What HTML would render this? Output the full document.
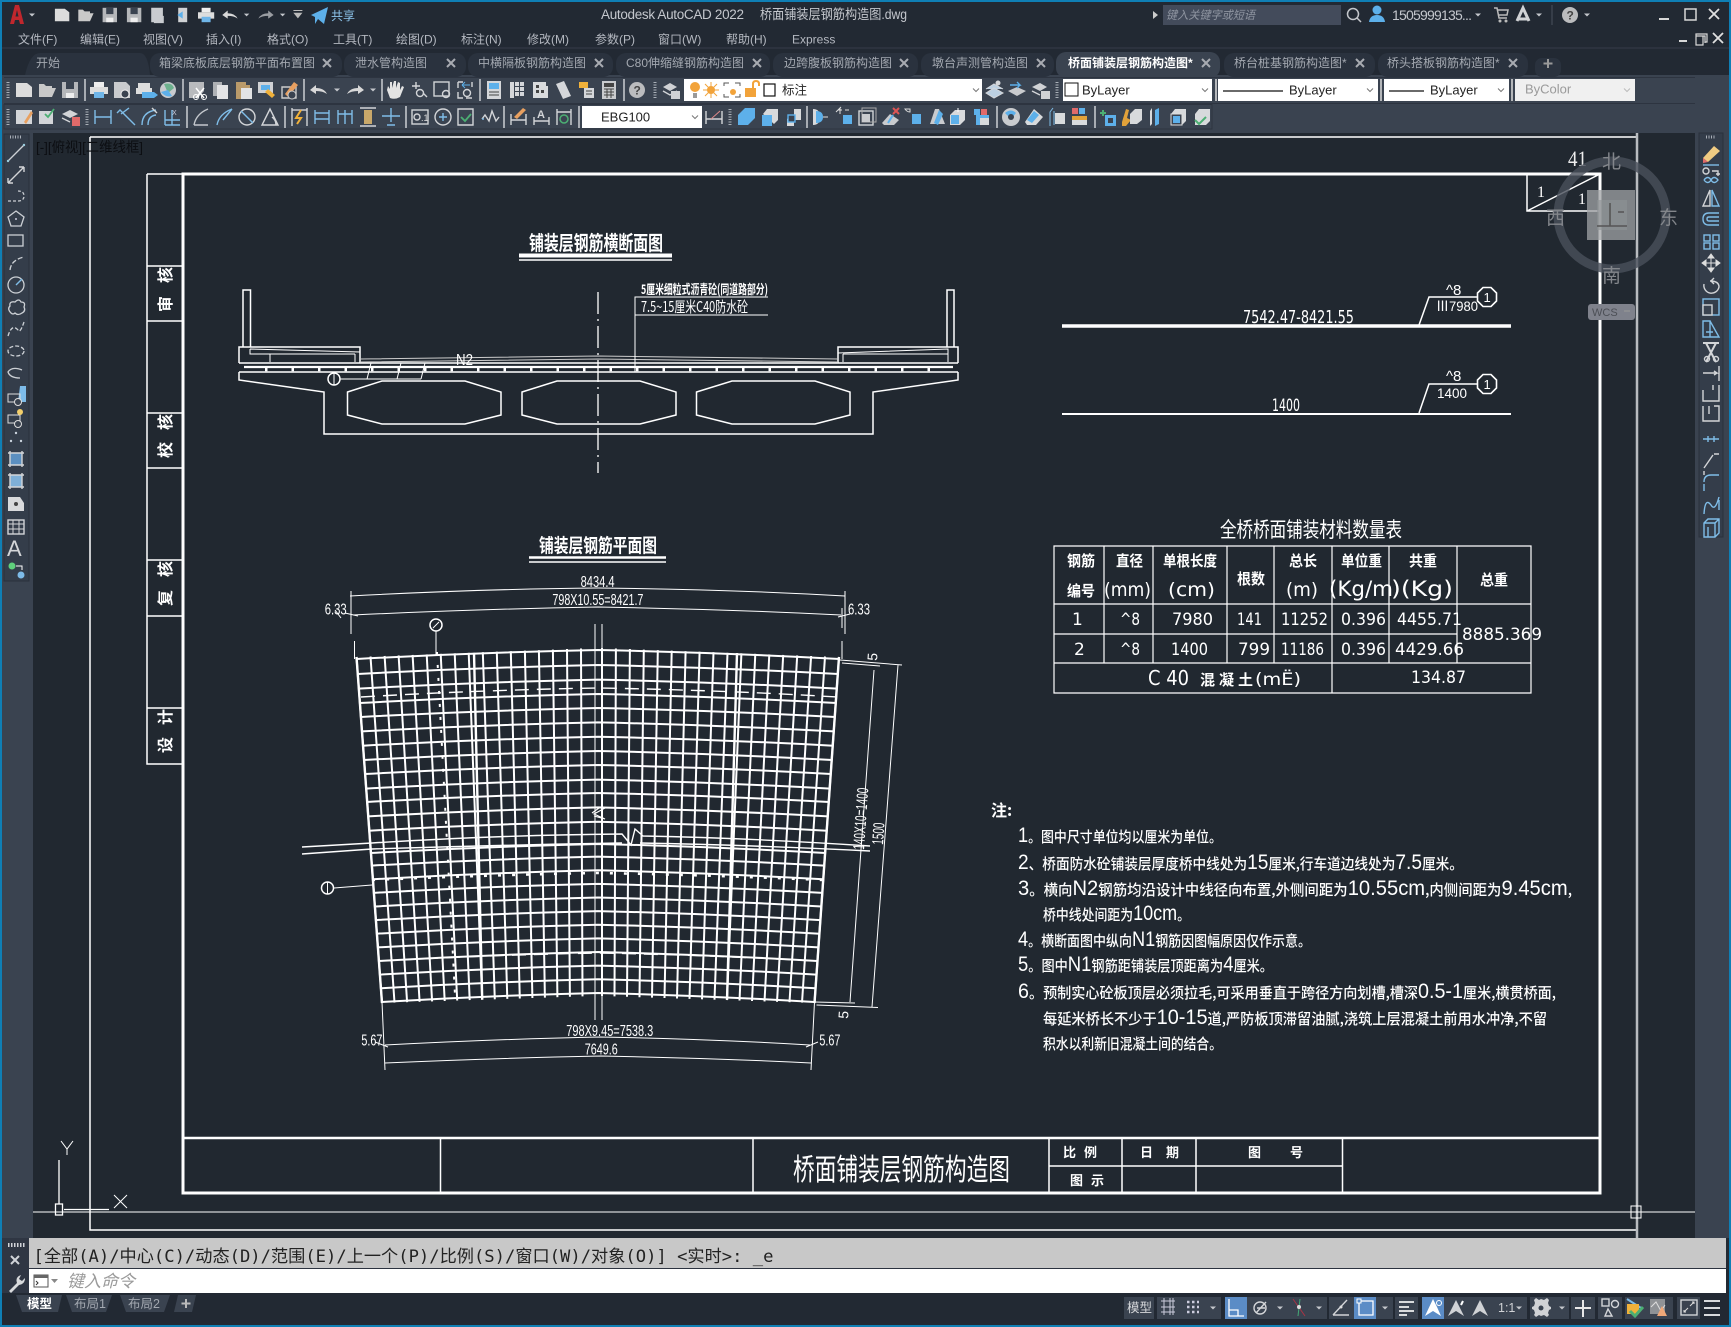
<!DOCTYPE html>
<html lang="zh"><head><meta charset="utf-8"><title>AutoCAD 2022</title>
<style>
html,body{margin:0;padding:0;background:#212830;overflow:hidden}
svg{display:block}
text{font-family:"Liberation Sans","Noto Sans CJK SC",sans-serif}
.m{font-size:12px;fill:#b4b8c0}
.t{font-size:12px;fill:#a3a8b0}
.c{fill:#fff;font-family:"Noto Sans CJK SC",sans-serif;font-weight:400}
.d{fill:#fff;font-size:16px;font-family:"Liberation Sans","Noto Sans CJK SC",sans-serif}
.w{fill:#fff;font-family:"DejaVu Sans","Noto Sans CJK SC",sans-serif;font-size:16px}
.n{fill:#fff;font-family:"Noto Sans CJK SC",sans-serif;font-size:15px;font-weight:500}
.n tspan{font-size:21px;font-weight:400;font-family:"Liberation Sans","Noto Sans CJK SC",sans-serif}
.l{stroke:#fff;fill:none;stroke-width:1.5}
.l1{stroke:#fff;fill:none;stroke-width:1}
.bl{fill:none;stroke:#7fbde8;stroke-width:1.4}
.gr{fill:none;stroke:#d3d5d8;stroke-width:1.4}
.sep{stroke:#d6d8dc;stroke-width:1.4}
.dot{fill:none;stroke:#ccd0d5;stroke-width:1.3}
</style></head><body>
<svg xmlns="http://www.w3.org/2000/svg" width="1731" height="1327" viewBox="0 0 1731 1327">
<defs>
<path id="x" d="M-4-4L4 4M4-4L-4 4" stroke="#a8abb1" stroke-width="2" fill="none"/>
<path id="ar" d="M-3-1.5H3L0 1.5z" fill="#c4c7cc"/>
<path id="ch" d="M-3-1.5L0 1.5L3-1.5" fill="none" stroke="#777"/>
<path id="grip" d="M0-8V8" stroke="#aab0b8" stroke-width="3" stroke-dasharray="1 1.5" fill="none"/>
<path id="new" d="M-8-7H3L8-3V7H-8z" fill="#dcdcdc"/>
<path id="open" d="M-8 7V-6H-3L-1-4H5V-2H-5L-8 7H5L9-2H-5" fill="#c9c9c9"/>
<g id="save"><path d="M-8-8H8V8H-8z" fill="#b5b7ba"/><path d="M-4-8H4V-1H-4z" fill="#3a4350"/><path d="M-4 3H4V8H-4z" fill="#eee"/></g>
<g id="print"><path d="M-5-8H5V-3H-5z" fill="#eee"/><path d="M-9-3H9V4H-9z" fill="#ddd"/><path d="M-5 2H5V8H-5z" fill="#6fb5e8"/></g>
<path id="und" d="M-9 0L-3-5V-2Q5-2 8 4Q4 1-3 1V4z" fill="#d8d8d8"/>
<path id="red" d="M9 0L3-5V-2Q-5-2-8 4Q-4 1 3 1V4z" fill="#9a9da2"/>
<g id="dim"><path d="M-8-7V7M8-7V7M-8 0H8" class="bl"/></g>
<path id="r" d="M-241.5 0Q-120-6.5 0-9Q120-6.5 241.5 0" fill="none" stroke="#fff" stroke-width="2" vector-effect="non-scaling-stroke"/>
<path id="oct" d="M-4-9.5H4L9.5-4V4L4 9.5H-4L-9.5 4V-4z" fill="#212830" stroke="#fff" stroke-width="1.6"/>
</defs>

<!-- window base -->
<rect width="1731" height="1327" fill="#222933"/>
<rect x="33" y="133" width="1663" height="1105" fill="#212830"/>
<rect x="2" y="75" width="1727" height="58" fill="#3a4350"/>
<rect x="2" y="133" width="31" height="1105" fill="#3a4350"/>
<rect x="1695" y="133" width="34" height="1105" fill="#3a4350"/>
<rect x="4" y="134" width="25" height="447" fill="#343d4a" stroke="#2a313c"/>
<rect x="1699" y="133" width="24" height="404" fill="#343d4a" stroke="#2a313c"/>

<!-- title row -->
<path d="M10 24L15 5H19L24 24H20L19 20H15L14 24zM15.5 16.5H18.5L17 10z" fill="#c0272d"/>
<use href="#ar" x="32" y="15"/>
<g transform="translate(0,15) scale(.9)">
<use href="#new" x="69" y="0"/><use href="#open" x="95" y="0"/><use href="#save" x="122" y="0"/><use href="#save" x="149" y="0"/>
<path d="M168-8H181V8H168zM171 1H182V9H171z" fill="#c9ccd0"/><path d="M198-8H208V8H198z" fill="#d0d2d5"/><path d="M197 0L203-4V4z" fill="#5db0ea"/>
<use href="#print" x="229" y="0"/><use href="#und" x="256" y="0"/><use href="#ar" x="274" y="0"/><use href="#red" x="295" y="0"/><use href="#ar" x="314" y="0"/>
<path d="M326-5H336M327-2H335L331 3z" stroke="#bbb" fill="#bbb"/>
</g>
<path d="M311 15L328 7L324 24L318 19L315 24V17z" fill="#5db0ea"/>
<text x="331" y="20" class="m" style="fill:#8cc3ea">共享</text>
<text x="601" y="19" style="font-size:13.5px;fill:#c4c7cd" textLength="143" lengthAdjust="spacing">Autodesk AutoCAD 2022</text>
<text x="760" y="19" style="font-size:13.5px;fill:#c4c7cd" textLength="147" lengthAdjust="spacingAndGlyphs">桥面铺装层钢筋构造图.dwg</text>
<path d="M1153 11L1158 15L1153 19z" fill="#ccc"/>
<rect x="1163" y="5" width="178" height="20" fill="#434b5b"/>
<text x="1166" y="19" style="font-size:11.5px;fill:#8f95a1;font-style:italic" textLength="89" lengthAdjust="spacingAndGlyphs">键入关键字或短语</text>
<circle cx="1353" cy="14" r="5.5" fill="none" stroke="#c4c7cc" stroke-width="1.5"/><path d="M1357 18L1361 22" stroke="#c4c7cc" stroke-width="1.5"/>
<circle cx="1377" cy="10" r="4.5" fill="#5db0ea"/><path d="M1369 22Q1370 15 1377 15Q1384 15 1385 22z" fill="#5db0ea"/>
<text x="1392" y="20" style="font-size:14px;fill:#c4c7cd" textLength="80" lengthAdjust="spacing">1505999135...</text>
<use href="#ar" x="1478" y="15"/>
<path d="M1494 8H1497L1499 18H1507M1498 10H1508L1507 15H1499" fill="none" stroke="#bbb" stroke-width="1.5"/><circle cx="1500" cy="21" r="1.5" fill="#bbb"/><circle cx="1506" cy="21" r="1.5" fill="#bbb"/>
<path d="M1517 21L1523 8L1529 21M1518 19H1528" fill="none" stroke="#d0d2d5" stroke-width="3"/>
<use href="#ar" x="1539" y="15"/><path d="M1552 5V25" stroke="#4a515e"/>
<circle cx="1570" cy="15" r="8" fill="#bbbcbe"/><text x="1566.5" y="19.5" style="font-size:12px;font-weight:700;fill:#444">?</text><use href="#ar" x="1587" y="15"/>
<path d="M1659 19H1669" stroke="#d8d8d8" stroke-width="2"/><rect x="1685" y="9" width="11" height="11" fill="none" stroke="#d8d8d8" stroke-width="1.5"/><path d="M1709 9L1719 19M1719 9L1709 19" stroke="#e0e0e0" stroke-width="1.8"/>
<!-- menu row -->
<text x="18" y="43.5" class="m">文件(F)</text><text x="80" y="43.5" class="m">编辑(E)</text><text x="143" y="43.5" class="m">视图(V)</text><text x="206" y="43.5" class="m">插入(I)</text><text x="267" y="43.5" class="m">格式(O)</text><text x="333" y="43.5" class="m">工具(T)</text><text x="396" y="43.5" class="m">绘图(D)</text><text x="461" y="43.5" class="m">标注(N)</text><text x="527" y="43.5" class="m">修改(M)</text><text x="595" y="43.5" class="m">参数(P)</text><text x="658" y="43.5" class="m">窗口(W)</text><text x="726" y="43.5" class="m">帮助(H)</text><text x="792" y="43.5" class="m">Express</text>
<path d="M1679 41H1687" stroke="#d8d8d8" stroke-width="2"/><path d="M1696 36H1705V43M1696 36V34H1707V42H1705M1696 36H1703V45H1696z" fill="none" stroke="#d8d8d8" stroke-width="1.2"/><path d="M1713 33L1723 43M1723 33L1713 43" stroke="#e0e0e0" stroke-width="1.8"/>
<path d="M2 48H1729" stroke="#353c48"/>
<!-- tabs -->
<g fill="#2a323e">
<path d="M25 75Q30 53 40 53H140Q148 53 150 75z"/>
<rect x="150" y="53" width="192" height="24" rx="10"/><rect x="344" y="53" width="122" height="24" rx="10"/><rect x="468" y="53" width="145" height="24" rx="10"/><rect x="616" y="53" width="154" height="24" rx="10"/><rect x="773" y="53" width="145" height="24" rx="10"/><rect x="921" y="53" width="133" height="24" rx="10"/>
<rect x="1224" y="53" width="151" height="24" rx="10"/><rect x="1378" y="53" width="150" height="24" rx="10"/><rect x="1535" y="58" width="26" height="19" rx="7"/>
</g>
<rect x="1056" y="52" width="164" height="26" rx="10" fill="#3a4350"/>
<text x="36" y="67" class="t">开始</text>
<text x="159" y="67" class="t">箱梁底板底层钢筋平面布置图</text><use href="#x" x="327" y="63"/>
<text x="355" y="67" class="t">泄水管构造图</text><use href="#x" x="451" y="63"/>
<text x="478" y="67" class="t">中横隔板钢筋构造图</text><use href="#x" x="599" y="63"/>
<text x="626" y="67" class="t">C80伸缩缝钢筋构造图</text><use href="#x" x="757" y="63"/>
<text x="784" y="67" class="t">边跨腹板钢筋构造图</text><use href="#x" x="904" y="63"/>
<text x="932" y="67" class="t">墩台声测管构造图</text><use href="#x" x="1041" y="63"/>
<text x="1068" y="67" class="t" style="fill:#fff;font-weight:700">桥面铺装层钢筋构造图*</text><use href="#x" x="1206" y="63"/>
<text x="1234" y="67" class="t">桥台桩基钢筋构造图*</text><use href="#x" x="1360" y="63"/>
<text x="1387" y="67" class="t">桥头搭板钢筋构造图*</text><use href="#x" x="1513" y="63"/>
<path d="M1548 59V68M1543.5 63.5H1552.5" stroke="#999" stroke-width="2"/>

<!-- Toolbar row 1 -->
<path d="M4 77.5H1695M4 103.5H1695M4 104.5H1212V129H4z" fill="none" stroke="#2d3440"/>
<g transform="translate(0,90)">
<use href="#grip" x="8"/><use href="#new" x="24"/><use href="#open" x="47"/><use href="#save" x="70"/>
<path d="M85-11V11M183-11V11M304-11V11M382-11V11M480-11V11M624-11V11" class="sep"/>
<use href="#print" x="99"/>
<path d="M114-8H126L130-4V8H114z" fill="#c9cbce"/><circle cx="125" cy="4" r="4" fill="#3a4350" stroke="#eee"/>
<path d="M138-7H150V-2H138zM136-2H152V4H136z" fill="#ddd"/><path d="M142 2H154L158 5L154 8H142z" fill="#5db0ea"/>
<circle cx="168" cy="0" r="8" fill="#c9cbce"/><path d="M164-6Q172-8 174-2L168 3z" fill="#6db18e"/><path d="M161 2Q166 8 172 6L168 0z" fill="#5db0ea"/>
<path d="M189-8H204V1L198 8H189z" fill="#b8babd"/><path d="M196-2L204 8M204-2L196 8" stroke="#fff" stroke-width="1.5"/><circle cx="196" cy="7" r="2.5" fill="none" stroke="#fff"/><circle cx="204" cy="7" r="2.5" fill="none" stroke="#fff"/>
<path d="M213-8H222V6H213z" fill="#aeb1b5"/><path d="M217-5H228V9H217z" fill="#e2e3e5"/>
<path d="M236-8H246V-5H250V9H236z" fill="#b99a6a"/><path d="M241-2H252V9H241z" fill="#e2e3e5"/>
<path d="M258-8H273V3H258z" fill="#d0d2d5"/><path d="M261-5H270V0H261z" fill="#5db0ea"/><path d="M265 2L272 8L275 5L268-1z" fill="#f0b13a"/>
<path d="M282-3H296V8H282z" fill="none" stroke="#ccc" stroke-width="1.4"/><path d="M285 4L294-8L298-5L288 7z" fill="#e8a060"/><circle cx="292" cy="5" r="4" fill="#3a4350" stroke="#ccc"/>
<use href="#und" x="319"/><use href="#ar" x="337"/><g transform="translate(355,0) scale(-1,1)"><use href="#und"/></g><use href="#ar" x="373"/>
<path d="M390 8L387 0L388-4L390-1V-8H392V-2L394-9L396-9V-2L398-8L400-7V0L402-4L404-3L400 7Q395 10 390 8z" fill="#e3e3e3"/>
<path d="M412-4H420M416-8V-1M423 3L427 7" class="gr"/><circle cx="420" cy="3" r="3.5" class="gr"/>
<rect x="434" y="-8" width="15" height="14" class="gr"/><circle cx="446" cy="4" r="3.5" class="gr"/>
<path d="M458-8H463M458-8V-2M472 8H466M458 2V8H463M472-8V-3" class="gr"/><path d="M462-5H470M462-5L465-8M462-5L465-2" stroke="#5db0ea" fill="none"/><circle cx="467" cy="3" r="3.5" class="gr"/>
<rect x="487" y="-9" width="14" height="18" fill="#d5d7da"/><rect x="489" y="-7" width="10" height="6" fill="#5db0ea"/><path d="M489 2H499M489 5H499" stroke="#444"/>
<g fill="#d5d7da"><rect x="510" y="-8" width="4" height="16"/><rect x="515" y="-8" width="4" height="4"/><rect x="520" y="-8" width="4" height="4"/><rect x="515" y="-3" width="4" height="4"/><rect x="520" y="-3" width="4" height="4"/><rect x="515" y="2" width="4" height="4"/><rect x="520" y="2" width="4" height="4"/></g>
<path d="M533-8H546V-4H548V8H533z" fill="#d9dbdd"/><path d="M536-5H539V-2H536zM536 0H539V3H536zM541 0H544V3H541z" fill="#444"/>
<path d="M556-6L564-9L571 6L563 9z" fill="#d5d7da"/>
<path d="M579-8H588V-2H579z" fill="#f0b13a"/><rect x="584" y="-2" width="10" height="10" fill="#d5d7da"/><path d="M586 1H592M586 4H592" stroke="#444"/>
<rect x="602" y="-9" width="14" height="18" fill="#c9cbce"/><rect x="604" y="-7" width="10" height="4" fill="#444"/><path d="M604-1H614M604 2H614M604 5H614M607-1V8M611-1V8" stroke="#444"/>
<circle cx="637" cy="0" r="8" fill="#bbbcbe"/><text x="633.5" y="4.5" style="font-size:12px;font-weight:700;fill:#444">?</text>
<use href="#grip" x="655"/>
<path d="M663-3L670-7L677-3L670 1z" fill="#d0d2d5"/><path d="M663 1L670 5L677 1" class="gr"/><rect x="671" y="1" width="9" height="8" fill="#d0d2d5"/>
<rect x="684" y="-11" width="298" height="22" fill="#fff"/>
<circle cx="695" cy="-3" r="5" fill="#f2a33a"/><path d="M693 3H697V8H693z" fill="#9a9a9a"/>
<circle cx="711" cy="0" r="4" fill="#f2a33a"/><path d="M711-8V8M703 0H719M705-6L717 6M717-6L705 6" stroke="#f2a33a"/>
<path d="M724-4V-7H729M735-7H740V-4M724 4V7H729M735 7H740V4" stroke="#555" fill="none"/><circle cx="733" cy="2" r="3" fill="#f2a33a"/>
<rect x="745" y="-2" width="11" height="9" fill="#f2a33a"/><path d="M753-2V-6Q753-9 756-9Q759-9 759-6V-4" stroke="#f2a33a" fill="none" stroke-width="2"/>
<rect x="764" y="-6" width="11" height="12" fill="#fff" stroke="#111" stroke-width="1.2"/>
<text x="782" y="4.5" style="font-size:12.5px;fill:#222">标注</text><use href="#ch" x="976"/>
<path d="M986 3L994-2L1003 3L994 8zM986-1L994-6L1003-1" fill="#bcd0e2" stroke="#d5d7da"/><circle cx="998" cy="-7" r="2.5" fill="#d5d7da"/>
<path d="M1008 1L1017-3L1026 1L1017 6z" fill="#c9cbce"/><path d="M1010-5H1020L1017-8M1020-5L1017-2" stroke="#5db0ea" fill="none" stroke-width="1.4"/>
<path d="M1032-3L1040-7L1047-3L1040 1z" fill="#d0d2d5"/><path d="M1032 1L1040 5" class="gr"/><rect x="1041" y="1" width="9" height="8" fill="#d0d2d5"/>
<use href="#grip" x="1057"/>
<rect x="1063" y="-11" width="149" height="22" fill="#fff"/><rect x="1065" y="-7" width="13" height="13" fill="#fff" stroke="#111"/>
<text x="1082" y="4.5" style="font-size:13px;fill:#222">ByLayer</text><use href="#ch" x="1205"/>
<path d="M1216-11V11M1381-11V11M1512-11V11" stroke="#e8e8e8" stroke-width="1.4"/>
<rect x="1218" y="-11" width="160" height="22" fill="#fff"/><path d="M1223 1H1283" stroke="#111" stroke-width="1.2"/>
<text x="1289" y="4.5" style="font-size:13px;fill:#222">ByLayer</text><use href="#ch" x="1370"/>
<rect x="1384" y="-11" width="125" height="22" fill="#fff"/><path d="M1389 1H1424" stroke="#111" stroke-width="1.2"/>
<text x="1430" y="4.5" style="font-size:13px;fill:#222">ByLayer</text><use href="#ch" x="1501"/>
<rect x="1515" y="-11" width="120" height="22" fill="#f0f0f0"/>
<text x="1525" y="3.5" style="font-size:13px;fill:#9a9a9a">ByColor</text><path d="M1624-1.5L1627 1.5L1630-1.5" fill="none" stroke="#bbb"/>
</g>

<!-- Toolbar row 2 -->
<g transform="translate(0,117)">
<use href="#grip" x="8"/>
<path d="M16-7H24V7H16zM24-7H32V7H24z" fill="#d3d5d8"/><path d="M24 5L31-6L33-4L26 7z" fill="#e8a060"/>
<path d="M39-6H46V7H39zM46-6H53V7H46z" fill="#d3d5d8"/><path d="M45-3L48 0L54-8" fill="none" stroke="#4caf73" stroke-width="1.8"/>
<path d="M62-3L70-7L78-3L70 1z" fill="#d3d5d8"/><path d="M62 1L70 5" class="gr"/><rect x="72" y="0" width="8" height="9" fill="#e06a6a"/>
<use href="#grip" x="87"/>
<use href="#dim" x="103"/>
<path d="M117-4L120-7L135 8M121-3L129-9" class="bl"/>
<path d="M142 8Q142-5 156-7M148 8Q148-1 156-2" class="bl"/><path d="M152-9L157-4" class="gr"/>
<path d="M165 8H180M165-7V8M172-7V8M165 3H180" class="bl"/><text x="172" y="-2" style="font-size:7px;fill:#ccd">X</text>
<path d="M187-11V11M285-11V11M406-11V11M504-11V11M579-11V11M807-11V11M997-11V11M1095-11V11" class="sep"/>
<path d="M194 8Q196-3 208-8M194 8L208 8" class="bl" style="stroke:#c4c8cd"/>
<path d="M217 8Q219-3 232-8M223 3L232-8" class="bl"/>
<circle cx="247" cy="0" r="8" class="gr"/><path d="M241-6L253 6" class="bl"/>
<path d="M262 8H278L270-8zM272 0Q276 3 276 8" class="gr"/>
<path d="M292-9V9M307-9V9" class="gr"/><path d="M292-7H307" class="gr"/><path d="M301-7L296 1H301L297 7" stroke="#f0b13a" fill="none" stroke-width="2"/>
<path d="M315-7V7M329-7V7M315-4H329M315 2H329" class="bl"/>
<path d="M338-7V7M345-7V7M352-7V7M338-3H352" class="bl"/>
<rect x="364" y="-7" width="8" height="14" fill="#c9a86a"/><path d="M360-9H376M360 9H376" class="gr"/>
<path d="M382-1H400M391-9V5M387 8H395" class="bl"/>
<rect x="412" y="-7" width="16" height="14" class="gr"/><circle cx="417" cy="0" r="3" class="gr"/><text x="421" y="4" style="font-size:9px;fill:#ddd">.1</text>
<circle cx="443" cy="0" r="8" class="gr"/><path d="M439 0H447M443-4V4" class="bl"/>
<path d="M458-8H473V8H458z" class="gr"/><path d="M461 0L465 4L471-3" fill="none" stroke="#4caf73" stroke-width="1.8"/>
<path d="M482 2L485-2L489 4L492-6L496 4L499 0" class="gr"/><path d="M482 2H484" class="bl"/>
<path d="M511-3V8M526-3V8M511 3H526" class="gr"/><path d="M514 0L523-9L526-7L517 2z" fill="#e8a060"/>
<path d="M534 0V8M549 0V8M534 4H549" class="gr"/><text x="537" y="1" style="font-size:11px;font-weight:700;fill:#d3d5d8">A</text>
<path d="M557-8V8M571-8V8M557-5H571" class="gr"/><circle cx="564" cy="2" r="4" fill="none" stroke="#4caf73" stroke-width="1.5"/>
<rect x="582" y="-11" width="120" height="22" fill="#fff"/>
<text x="601" y="4.5" style="font-size:13px;fill:#222">EBG100</text><use href="#ch" x="695"/>
<path d="M706-6V7M722-6V7M706 2H722" class="gr"/><path d="M711 2L720-6" stroke="#d88" fill="none"/>
<use href="#grip" x="730"/>
<path d="M738-2L745-9H755V1L748 8H738z" fill="#5db0ea"/>
<path d="M763-3L767-8H778V3L774 7" fill="#d8dadc"/><path d="M762-2H772V9H762z" fill="#5db0ea"/>
<path d="M787 2L791-2H794V-8H801V3H794V9H787z" fill="#d8dadc"/><rect x="788" y="-2" width="7" height="7" fill="#3a4350" stroke="#5db0ea" stroke-width="1.4"/>
<path d="M813-8Q820-8 820 0Q820 8 813 8V-8z" fill="#d8dadc"/><path d="M816-6Q823-6 823 0Q823 6 816 6" fill="#5db0ea"/><path d="M823 0H828" stroke="#ddd"/>
<path d="M838-7H842M840-9V-3" stroke="#ddd"/><rect x="843" y="-2" width="9" height="9" fill="#5db0ea"/><path d="M836-5L841-10M845-7H849" stroke="#ddd"/>
<rect x="859" y="-6" width="14" height="14" class="gr"/><rect x="862" y="-9" width="14" height="14" fill="none" stroke="#aaa"/><rect x="862" y="-3" width="8" height="8" fill="#c9cbce"/>
<path d="M882 6L890-3L899 3L894 8H884z" fill="#c9cbce"/><path d="M893-9L899-3M899-9L893-3" stroke="#d55" stroke-width="2"/><path d="M888 6L893-2" stroke="#5db0ea" stroke-width="2"/>
<path d="M905-8Q907-5 910-5V-8z" fill="none" stroke="#ddd"/><rect x="912" y="-3" width="9" height="10" fill="#5db0ea"/>
<path d="M930 7L935-8H939L945 7z" fill="#c9cbce"/><path d="M934 6L939-7L943-3L938 8z" fill="#5db0ea"/>
<path d="M950-2L955-7H965V3L960 8H950z" fill="#d8dadc"/><rect x="951" y="-2" width="8" height="9" fill="#5db0ea"/><path d="M958-9V-5" stroke="#fff"/>
<rect x="974" y="-8" width="6" height="6" fill="#5db0ea"/><rect x="981" y="-8" width="6" height="6" fill="#e06a6a"/><rect x="976" y="-2" width="13" height="10" fill="#5db0ea"/><rect x="980" y="1" width="9" height="7" fill="#d8dadc"/>
<circle cx="1011" cy="0" r="9" fill="#c9cbce"/><path d="M1005-4Q1011-9 1016-4L1011 2z" fill="#5db0ea"/><circle cx="1011" cy="0" r="3" fill="#3a4350"/>
<path d="M1025 5L1034-8L1043 0L1036 8H1027z" fill="#d8dadc"/><path d="M1027 3L1034-6L1039-2L1032 6z" fill="#5db0ea"/>
<path d="M1050 9V-5L1053-9M1054-6V8" stroke="#7fbde8" fill="none"/><rect x="1055" y="-4" width="10" height="11" fill="#d8dadc"/>
<rect x="1072" y="-9" width="6" height="6" fill="#e06a6a"/><rect x="1079" y="-9" width="6" height="6" fill="#5db0ea"/><rect x="1072" y="-1" width="15" height="4" fill="#e2a23a"/><rect x="1072" y="3" width="15" height="5" fill="#d8dadc"/>
<path d="M1100-4H1106M1103-7V-1" stroke="#4caf73" stroke-width="2"/><rect x="1105" y="-2" width="11" height="11" fill="#5db0ea"/><rect x="1108" y="1" width="5" height="5" fill="#3a4350"/>
<path d="M1126-8L1129-7L1127 1L1131 3L1126 9H1122V5z" fill="#e2a23a"/><path d="M1130-3L1135-8H1142V3L1137 7H1130z" fill="#d8dadc"/>
<path d="M1150-6L1152-9V7L1150 9z" fill="#d8dadc"/><path d="M1155-7L1159-9V7L1155 9z" fill="#5db0ea"/><path d="M1171-3L1175-8H1186V4L1182 8H1171z" fill="#d8dadc"/><rect x="1171" y="-3" width="11" height="11" fill="#3a4350" stroke="#ddd"/><rect x="1173" y="-1" width="7" height="7" fill="#5db0ea"/>
<path d="M1195-3L1199-8H1210V4L1206 8H1195z" fill="#d8dadc"/><path d="M1195 3L1199 7L1206 0" stroke="#4caf73" fill="none" stroke-width="2"/>
</g>

<!-- Drawing: sheet -->
<path d="M90 137H1637M90 137V1230H1637" class="l"/>
<path d="M1637 133V1238" stroke="#b8bbbf" stroke-width="2.5"/>
<path d="M33 1212H1695" class="l1"/>
<rect x="1631" y="1206" width="10" height="12" fill="none" stroke="#fff"/>
<rect x="183" y="174" width="1417" height="1019" fill="none" stroke="#fff" stroke-width="3"/>
<!-- left margin table -->
<path d="M147 174V764H183M147 174H183M147 266H183M147 321H183M147 413H183M147 468H183M147 560H183M147 616H183M147 708H183" class="l"/>
<g>
<text transform="translate(171,283) rotate(-90)" class="c" style="font-size:16px;font-weight:700">核</text>
<text transform="translate(171,312) rotate(-90)" class="c" style="font-size:16px;font-weight:700">审</text>
<text transform="translate(171,430) rotate(-90)" class="c" style="font-size:16px;font-weight:700">核</text>
<text transform="translate(171,458) rotate(-90)" class="c" style="font-size:16px;font-weight:700">校</text>
<text transform="translate(171,577) rotate(-90)" class="c" style="font-size:16px;font-weight:700">核</text>
<text transform="translate(171,606) rotate(-90)" class="c" style="font-size:16px;font-weight:700">复</text>
<text transform="translate(171,725) rotate(-90)" class="c" style="font-size:16px;font-weight:700">计</text>
<text transform="translate(171,753) rotate(-90)" class="c" style="font-size:16px;font-weight:700">设</text>
</g>
<text x="36" y="152" style="font-size:14px;fill:#0c0e12" textLength="107" lengthAdjust="spacingAndGlyphs">[-][俯视][二维线框]</text>
<!-- title block -->
<path d="M183 1138H1600" stroke="#fff" stroke-width="2.5"/>
<path d="M440.5 1138V1193M753 1138V1193M1049 1138V1193M1122 1138V1193M1196 1138V1193M1342.5 1138V1193M1049 1166H1342.5" class="l"/>
<text x="793" y="1180" class="c" style="font-size:30px" textLength="217" lengthAdjust="spacingAndGlyphs">桥面铺装层钢筋构造图</text>
<text x="1063" y="1157" class="c" style="font-size:13px;font-weight:700">比</text><text x="1084" y="1157" class="c" style="font-size:13px;font-weight:700">例</text>
<text x="1140" y="1157" class="c" style="font-size:13px;font-weight:700">日</text><text x="1166" y="1157" class="c" style="font-size:13px;font-weight:700">期</text>
<text x="1248" y="1157" class="c" style="font-size:13px;font-weight:700">图</text><text x="1290" y="1157" class="c" style="font-size:13px;font-weight:700">号</text>
<text x="1070" y="1185" class="c" style="font-size:13px;font-weight:700">图</text><text x="1091" y="1185" class="c" style="font-size:13px;font-weight:700">示</text>
<!-- north east block -->
<path d="M1527 174V211H1600M1527 211L1600 174" class="l"/>
<text x="1537" y="197" style="font-size:16px;fill:#fff;font-family:'Liberation Serif',serif">1</text>
<text x="1578" y="204" style="font-size:16px;fill:#fff;font-family:'Liberation Serif',serif">1</text>
<text x="1568" y="166" style="font-size:22px;fill:#eee;font-family:'Liberation Serif',serif" textLength="19" lengthAdjust="spacingAndGlyphs">41</text>

<!-- Cross-section -->
<text x="529" y="250" class="c" style="font-size:20px;font-weight:700" textLength="134" lengthAdjust="spacingAndGlyphs">铺装层钢筋横断面图</text>
<path d="M519 255.5H672" stroke="#fff" stroke-width="4"/><path d="M519 260H672" class="l"/>
<path d="M243 347V290H250.5V347M947 347V290H954V347" class="l"/>
<path d="M239 363V347H360V363M958 363V347H838V363M239 363H958M239 372H958M239 372V380L324 392V434H873V392L958 380V372" class="l"/>
<path d="M250 349L360 352M250 349V354H355M270 354V362M838 353L948 349V354H843M948 354V362M355 354V362M843 354V362" class="l1"/>
<path d="M360 359Q480 358 598 356Q720 358 838 359M360 362Q480 361 598 359Q720 361 838 362" stroke="#ccc" fill="none"/>
<path d="M244 367H953" stroke="#fff" stroke-width="2.2"/>
<path d="M265 369.5H934" stroke="#fff" stroke-width="3.5" stroke-dasharray="2.5 24"/>
<path d="M347.5 392L382 381H465L501 392V415L465 424H382L347.5 415zM522 392L557 381H640L676 392V415L640 424H557L522 415zM696.5 392L732 381H815L850 392V415L815 424H732L696.5 415z" class="l"/>
<path d="M598 292V473" stroke="#fff" stroke-width="1.3" stroke-dasharray="22 5 2 5"/>
<path d="M635 372V297H768M635 315H768" class="l1"/>
<text x="641" y="294" class="c" style="font-size:13px;font-weight:700" textLength="127" lengthAdjust="spacingAndGlyphs">5厘米细粒式沥青砼(同道路部分)</text>
<text x="641" y="312" class="c" style="font-size:15px" textLength="107" lengthAdjust="spacingAndGlyphs">7.5~15厘米C40防水砼</text>
<text x="456" y="365" class="d" style="font-size:16px" textLength="17" lengthAdjust="spacingAndGlyphs">N2</text>
<circle cx="334" cy="379" r="6" class="l"/><path d="M334 373V385" class="l1"/><path d="M340 379H421M367 379L371 363M397 379L401 363M421 379L425 363" class="l1"/>

<!-- Plan -->
<text x="539" y="552" class="c" style="font-size:19px;font-weight:700" textLength="118" lengthAdjust="spacingAndGlyphs">铺装层钢筋平面图</text>
<path d="M529 557.5H666" stroke="#fff" stroke-width="2.5"/><path d="M529 562H666" class="l"/>
<text x="580.6" y="586.8" class="d" textLength="34" lengthAdjust="spacingAndGlyphs">8434.4</text>
<text x="552.4" y="605" class="d" textLength="91" lengthAdjust="spacingAndGlyphs">798X10.55=8421.7</text>
<text x="324.7" y="614.6" class="d" textLength="22" lengthAdjust="spacingAndGlyphs">6.33</text>
<text x="848" y="614.6" class="d" textLength="22" lengthAdjust="spacingAndGlyphs">6.33</text>
<text x="566.3" y="1036" class="d" textLength="87" lengthAdjust="spacingAndGlyphs">798X9.45=7538.3</text>
<text x="584.7" y="1054.6" class="d" textLength="33" lengthAdjust="spacingAndGlyphs">7649.6</text>
<text x="361.4" y="1045.7" class="d" textLength="21" lengthAdjust="spacingAndGlyphs">5.67</text>
<text x="819.4" y="1045.7" class="d" textLength="21" lengthAdjust="spacingAndGlyphs">5.67</text>
<text transform="translate(864,850) rotate(-86)" class="d" textLength="62" lengthAdjust="spacingAndGlyphs">140X10=1400</text>
<text transform="translate(883,845) rotate(-86)" class="d" textLength="22" lengthAdjust="spacingAndGlyphs">1500</text>
<text transform="translate(877,661) rotate(-86)" class="d" style="font-size:14px">5</text>
<text transform="translate(848,1019) rotate(-86)" class="d" style="font-size:14px">5</text>
<path d="M350 596Q480 589 598 588Q720 589 845 596M353 615Q480 609 598 607Q720 609 841 615M385 1045Q500 1039 600 1037Q710 1039 810 1045M385 1063Q500 1058 601 1056Q710 1058 811 1063" class="l1"/>
<path d="M351 591V634M354.5 641V659M845 591V634M842 641V659M382 1002L385 1070M814.5 1002L811 1070M595 624V1020M602 624V1020" class="l1"/>
<path d="M335 610L341 618M345 613L358 616M838 617L850 614M842 608V628M375 1042L388 1047M806 1047L818 1042M840 660L902 665M842 663L880 666M814.5 1002L855 1003M816.5 1005L878 1007.5M898 665L872 1007M874 670L850 1002" class="l1"/>
<circle cx="436" cy="625" r="6" class="l"/><path d="M433 628L439 622M436 631V655" class="l1"/>
<circle cx="327.5" cy="888" r="6" class="l"/><path d="M327.5 882V894M334 888L372 885" class="l1"/>
<!-- grid verticals -->
<path fill="none" stroke="#fff" stroke-width="2" d="M356.5 657L382 1003M370.5 656.5L394.5 1002.6M384.6 656L407.1 1002.2M398.6 655.4L419.6 1001.8M412.6 654.9L432.1 1001.4M426.7 654.4L444.7 1001M440.7 653.8L457.2 1000.5M454.7 653.3L469.7 1000.1M468.7 652.8L482.2 999.7M482.8 652.2L494.8 999.3M496.8 651.7L507.3 998.9M510.8 651.2L519.8 998.5M524.9 650.6L532.4 998M538.9 650.1L544.9 997.6M552.9 649.6L557.4 997.2M567 649L569.9 996.8M581 648.5L582.5 996.4M602 648L602 996M615.9 648.5L614.5 996.4M629.9 649L627 996.8M643.8 649.6L639.5 997.2M657.8 650.1L652 997.6M671.7 650.6L664.5 998M685.6 651.2L677 998.5M699.6 651.7L689.5 998.9M713.5 652.2L702 999.3M727.5 652.8L714.5 999.7M741.4 653.3L727 1000.1M755.3 653.8L739.5 1000.5M769.3 654.4L752 1001M783.2 654.9L764.5 1001.4M797.2 655.4L777 1001.8M811.1 656L789.5 1002.2M825 656.5L802 1002.6M839 657L814.5 1003"/>
<path fill="none" stroke="#fff" stroke-width="2.4" d="M356.5 657L382 1003M474 652.8L482.2 999.7M737 653L727 1000M839 657L814.5 1003"/>
<!-- grid rows -->
<g transform="translate(598,0)">
<use href="#r" transform="translate(0,659)"/><use href="#r" transform="translate(0,674) scale(.995,1)"/><use href="#r" transform="translate(0,688.6) scale(.991,1)"/><use href="#r" transform="translate(0,703) scale(.987,1)"/><use href="#r" transform="translate(0,717) scale(.982,1)"/><use href="#r" transform="translate(0,731.4) scale(.978,1)"/><use href="#r" transform="translate(0,745.7) scale(.974,1)"/><use href="#r" transform="translate(0,760) scale(.969,1)"/><use href="#r" transform="translate(0,774) scale(.965,1)"/><use href="#r" transform="translate(0,788.6) scale(.961,1)"/><use href="#r" transform="translate(0,802) scale(.957,1)"/><use href="#r" transform="translate(0,816.4) scale(.952,1)"/><use href="#r" transform="translate(0,830.7) scale(.948,1)"/>
<use href="#r" transform="translate(0,865.6) scale(.937,1)"/><use href="#r" transform="translate(0,879.3) scale(.933,1)"/><use href="#r" transform="translate(0,892.9) scale(.929,1)"/><use href="#r" transform="translate(0,906.5) scale(.925,1)"/><use href="#r" transform="translate(0,920.1) scale(.921,1)"/><use href="#r" transform="translate(0,933.7) scale(.917,1)"/><use href="#r" transform="translate(0,947.4) scale(.913,1)"/><use href="#r" transform="translate(0,961) scale(.908,1)"/><use href="#r" transform="translate(0,974.6) scale(.904,1)"/><use href="#r" transform="translate(0,988.3) scale(.9,1)"/><use href="#r" transform="translate(0,1002) scale(.896,1)"/>
</g>
<!-- dashed -->
<path d="M361 697Q480 690 598 688Q720 690 837 697M380 961Q490 955 598 953Q710 955 816 961" stroke="#fff" stroke-width="1.4" fill="none" stroke-dasharray="14 8"/>
<path d="M372 880Q490 875 598 873Q710 875 822 880" stroke="#fff" stroke-width="2.5" fill="none" stroke-dasharray="3 11"/>
<path d="M437 652L455 995" stroke="#fff" stroke-width="2" fill="none" stroke-dasharray="3 10"/>
<!-- break -->
<path d="M302 847L372 843Q500 835 622 834L631 845L635 829L643 836Q750 838 870 846M302 854L372 849Q500 845 622 843M640 843Q750 845 870 851" fill="none" stroke="#fff" stroke-width="1.4"/>
<use href="#r" transform="translate(598,853) scale(.942,1)"/>
<path d="M592 813L599 808H605L594 814L605 819L594 816" fill="none" stroke="#fff" stroke-width="1.1"/>

<!-- Rebar details -->
<path d="M1062 326H1511" stroke="#fff" stroke-width="3.5"/>
<path d="M1062 414H1511" stroke="#fff" stroke-width="2"/>
<path d="M1419 325L1429 297H1477M1419 413L1429 384H1477" class="l"/>
<text x="1243" y="323" class="w" style="font-size:18px" textLength="111" lengthAdjust="spacingAndGlyphs">7542.47-8421.55</text>
<text x="1272" y="411" class="w" style="font-size:17px" textLength="28" lengthAdjust="spacingAndGlyphs">1400</text>
<use href="#oct" x="1487" y="297"/><use href="#oct" x="1487" y="384"/>
<text x="1483.5" y="302" class="d" style="font-size:13px">1</text><text x="1483.5" y="389" class="d" style="font-size:13px">1</text>
<text x="1446" y="295" class="d" style="font-size:15px">^8</text><text x="1446" y="381" class="d" style="font-size:15px">^8</text>
<text x="1436" y="311" class="d" style="font-size:14px" textLength="42" lengthAdjust="spacingAndGlyphs">Ⅲ7980</text>
<text x="1437" y="398" class="d" style="font-size:14px" textLength="30" lengthAdjust="spacingAndGlyphs">1400</text>

<!-- Table -->
<text x="1220" y="537" class="c" style="font-size:21px" textLength="182" lengthAdjust="spacingAndGlyphs">全桥桥面铺装材料数量表</text>
<path d="M1054 546H1531V693H1054zM1054 604H1531M1054 634H1457M1054 663H1531M1104 546V663M1153 546V663M1227 546V663M1274 546V663M1332 546V693M1389 546V663M1457 546V663" class="l1" style="stroke-width:1.2"/>
<text x="1067" y="566" class="c" style="font-size:15px;font-weight:700" textLength="28" lengthAdjust="spacingAndGlyphs">钢筋</text>
<text x="1067" y="596" class="c" style="font-size:15px;font-weight:700" textLength="28" lengthAdjust="spacingAndGlyphs">编号</text>
<text x="1116" y="566" class="c" style="font-size:15px;font-weight:700" textLength="27" lengthAdjust="spacingAndGlyphs">直径</text>
<text x="1163" y="566" class="c" style="font-size:15px;font-weight:700" textLength="54" lengthAdjust="spacingAndGlyphs">单根长度</text>
<text x="1237" y="584" class="c" style="font-size:15px;font-weight:700" textLength="28" lengthAdjust="spacingAndGlyphs">根数</text>
<text x="1289" y="566" class="c" style="font-size:15px;font-weight:700" textLength="28" lengthAdjust="spacingAndGlyphs">总长</text>
<text x="1341" y="566" class="c" style="font-size:15px;font-weight:700" textLength="41" lengthAdjust="spacingAndGlyphs">单位重</text>
<text x="1409" y="566" class="c" style="font-size:15px;font-weight:700" textLength="28" lengthAdjust="spacingAndGlyphs">共重</text>
<text x="1480" y="585" class="c" style="font-size:15px;font-weight:700" textLength="28" lengthAdjust="spacingAndGlyphs">总重</text>
<text x="1104" y="596" class="w" style="font-size:19px" textLength="47" lengthAdjust="spacingAndGlyphs">(mm)</text>
<text x="1168" y="596" class="w" style="font-size:19px" textLength="47" lengthAdjust="spacingAndGlyphs">(cm)</text>
<text x="1286" y="596" class="w" style="font-size:19px" textLength="32" lengthAdjust="spacingAndGlyphs">(m)</text>
<text x="1329" y="596" class="w" style="font-size:21px" textLength="64" lengthAdjust="spacingAndGlyphs">(Kg/m</text>
<text x="1391" y="596" class="w" style="font-size:21px" textLength="62" lengthAdjust="spacingAndGlyphs">)(Kg)</text>
<text x="1072" y="625" class="w" style="font-size:17px">1</text><text x="1120" y="625" class="w" style="font-size:17px" textLength="20" lengthAdjust="spacingAndGlyphs">^8</text><text x="1172" y="625" class="w" textLength="41" lengthAdjust="spacingAndGlyphs" style="font-size:17px">7980</text><text x="1237" y="625" class="w" textLength="25" lengthAdjust="spacingAndGlyphs" style="font-size:17px">141</text><text x="1281" y="625" class="w" textLength="47" lengthAdjust="spacingAndGlyphs" style="font-size:17px">11252</text><text x="1341" y="625" class="w" textLength="45" lengthAdjust="spacingAndGlyphs" style="font-size:17px">0.396</text><text x="1397" y="625" class="w" textLength="65" lengthAdjust="spacingAndGlyphs" style="font-size:17px">4455.71</text>
<text x="1074" y="655" class="w" style="font-size:17px">2</text><text x="1120" y="655" class="w" style="font-size:17px" textLength="20" lengthAdjust="spacingAndGlyphs">^8</text><text x="1171" y="655" class="w" textLength="37" lengthAdjust="spacingAndGlyphs" style="font-size:17px">1400</text><text x="1238" y="655" class="w" textLength="32" lengthAdjust="spacingAndGlyphs" style="font-size:17px">799</text><text x="1281" y="655" class="w" textLength="43" lengthAdjust="spacingAndGlyphs" style="font-size:17px">11186</text><text x="1341" y="655" class="w" textLength="45" lengthAdjust="spacingAndGlyphs" style="font-size:17px">0.396</text><text x="1395" y="655" class="w" textLength="69" lengthAdjust="spacingAndGlyphs" style="font-size:17px">4429.66</text>
<text x="1462" y="640" class="w" textLength="80" lengthAdjust="spacingAndGlyphs" style="font-size:17px">8885.369</text>
<text x="1148" y="685" class="w" style="font-size:20px" textLength="41" lengthAdjust="spacingAndGlyphs">C 40</text>
<text x="1200" y="685" class="c" style="font-size:15px;font-weight:700" textLength="53" lengthAdjust="spacing">混凝土</text>
<text x="1255" y="685" class="w" style="font-size:17px" textLength="46" lengthAdjust="spacingAndGlyphs">(mË)</text>
<text x="1411" y="683" class="w" style="font-size:17px" textLength="55" lengthAdjust="spacingAndGlyphs">134.87</text>

<!-- Notes -->
<text x="991" y="816" class="c" style="font-size:16px;font-weight:700">注:</text>
<text x="1018" y="842" class="n" textLength="204" lengthAdjust="spacingAndGlyphs"><tspan>1</tspan>。图中尺寸单位均以厘米为单位。</text>
<text x="1018" y="869" class="n" textLength="445" lengthAdjust="spacingAndGlyphs"><tspan>2</tspan>、桥面防水砼铺装层厚度桥中线处为<tspan>15</tspan>厘米,行车道边线处为<tspan>7.5</tspan>厘米。</text>
<text x="1018" y="895" class="n" textLength="554" lengthAdjust="spacingAndGlyphs"><tspan>3</tspan>。横向<tspan>N2</tspan>钢筋均沿设计中线径向布置,外侧间距为<tspan>10.55cm</tspan>,内侧间距为<tspan>9.45cm</tspan>,</text>
<text x="1043" y="920" class="n" textLength="147" lengthAdjust="spacingAndGlyphs">桥中线处间距为<tspan>10cm</tspan>。</text>
<text x="1018" y="946" class="n" textLength="293" lengthAdjust="spacingAndGlyphs"><tspan>4</tspan>。横断面图中纵向<tspan>N1</tspan>钢筋因图幅原因仅作示意。</text>
<text x="1018" y="971" class="n" textLength="255" lengthAdjust="spacingAndGlyphs"><tspan>5</tspan>。图中<tspan>N1</tspan>钢筋距铺装层顶距离为<tspan>4</tspan>厘米。</text>
<text x="1018" y="998" class="n" textLength="538" lengthAdjust="spacingAndGlyphs"><tspan>6</tspan>。预制实心砼板顶层必须拉毛,可采用垂直于跨径方向划槽,槽深<tspan>0.5-1</tspan>厘米,横贯桥面,</text>
<text x="1043" y="1024" class="n" textLength="504" lengthAdjust="spacingAndGlyphs">每延米桥长不少于<tspan>10-15</tspan>道,严防板顶滞留油腻,浇筑上层混凝土前用水冲净,不留</text>
<text x="1043" y="1049" class="n" textLength="179" lengthAdjust="spacingAndGlyphs">积水以利新旧混凝土间的结合。</text>

<!-- UCS -->
<path d="M59 1160V1204M64 1209.5H109" class="l1" style="stroke-width:1.3"/>
<rect x="55.5" y="1204" width="7" height="11" fill="none" stroke="#fff" stroke-width="1.3"/>
<path d="M61 1141L67 1149L73 1141M67 1149V1155M114 1195L127 1208M127 1195L114 1208" class="l1"/>

<!-- ViewCube -->
<circle cx="1612" cy="215" r="54" fill="none" stroke="#4a505b" stroke-width="9" opacity=".8"/>
<rect x="1587" y="190" width="48" height="50" fill="#a0a3a6" opacity=".75"/>
<rect x="1597" y="200" width="30" height="30" fill="#8e9296" opacity=".6"/>
<path d="M1610 203V226M1597 226H1627M1618 212H1624" stroke="#555" stroke-width="1.6" fill="none"/>
<text x="1602" y="168" style="font-size:19px;fill:#83868b">北</text>
<text x="1602" y="282" style="font-size:19px;fill:#83868b">南</text>
<text x="1546" y="224" style="font-size:19px;fill:#83868b">西</text>
<text x="1659" y="224" style="font-size:19px;fill:#83868b">东</text>
<rect x="1588" y="304" width="47" height="16" rx="3" fill="#7f828c"/>
<text x="1592" y="316" style="font-size:11px;fill:#4c4f56">WCS</text><path d="M1624 311H1630" stroke="#999"/>

<!-- Left palette icons -->
<g transform="translate(16,0)">
<path d="M-6 137H6" stroke="#aab0b8" stroke-width="3" stroke-dasharray="1 1.5"/>
<path d="M-8 161L8 145" class="dot"/><circle cx="-8" cy="161" r="1.2" fill="#9cd"/><circle cx="8" cy="145" r="1.2" fill="#9cd"/>
<path d="M-8 183L8 167M-8 183V178M-8 183H-3M8 167V172M8 167H3" class="gr"/>
<path d="M-8 201H2Q8 201 8 196Q8 191 2 191" class="dot" stroke-dasharray="3 2"/>
<path d="M0 211L8 217L5 226H-5L-8 217z" class="dot"/><circle cy="219" r="1" fill="#ccd"/>
<rect x="-8" y="235" width="15" height="11" class="dot"/>
<path d="M-6 270Q-5 260 8 257" class="dot" stroke-dasharray="5 2"/>
<circle cy="285" r="8" class="dot"/><path d="M0 285L6 279" class="bl"/>
<path d="M-5 313Q-9 309-6 306Q-7 301-1 302Q3 298 5 302Q10 302 8 307Q10 311 6 313Q2 316-1 313Q-3 315-5 313z" class="dot"/>
<path d="M-8 336Q-4 323 2 330Q4 334 8 322" class="dot" stroke-dasharray="4 2"/>
<ellipse cy="351" rx="8" ry="5" class="dot" stroke-dasharray="4 2"/>
<path d="M6 370Q-4 366-8 372Q-6 378 4 378" class="dot"/>
<path d="M4 386H10V402H2z" fill="#7dbbe8"/><rect x="-8" y="394" width="12" height="8" fill="none" stroke="#ddd"/><circle cx="2" cy="402" r="3.5" fill="#3a4350" stroke="#ddd"/>
<rect x="-8" y="415" width="12" height="8" fill="none" stroke="#ddd"/><circle cx="4" cy="412" r="3" fill="#f3cf6b"/><circle cx="2" cy="424" r="3.5" fill="#3a4350" stroke="#ddd"/>
<g fill="#c9d2dc"><circle cy="433" r="1.2"/><circle cx="-5" cy="441" r="1.2"/><circle cx="5" cy="441" r="1.2"/></g>
<rect x="-6" y="453" width="12" height="12" fill="#5b8fc0"/><path d="M-8 453H8M-8 465H8M-6 451V467M6 451V467" class="gr"/>
<rect x="-6" y="475" width="12" height="12" fill="#7fb0d8"/><path d="M-8 475H8M-8 487H8M-6 473V489M6 473V489" class="gr"/>
<path d="M-8 497H4L8 503V511H-8z" fill="#d9dadc"/><circle cy="504" r="2" fill="#444"/>
<rect x="-8" y="520" width="16" height="14" class="gr"/><path d="M-8 524H8M-8 529H8M-3 520V534M3 520V534" class="gr" style="stroke-width:1"/>
<text x="-9" y="556" style="font-size:22px;fill:#d3d5d8">A</text>
<circle cx="-4" cy="566" r="3.5" fill="#5fd07c"/><circle cx="5" cy="575" r="3.5" fill="#7dbbe8"/><path d="M0 566H6V570" stroke="#fff" fill="none"/>
</g>

<!-- Right palette icons -->
<g transform="translate(1711,0)">
<path d="M-5 137H5" stroke="#aab0b8" stroke-width="3" stroke-dasharray="1 1.5"/>
<path d="M-8 158L3 146L9 151L-3 162z" fill="#f0cb82"/><path d="M-8 158L-3 162L-8 163z" fill="#e06a6a"/><path d="M-8 165H8" class="bl"/>
<circle cx="-5" cy="171" r="3" class="gr"/><path d="M1 171H7V176M5 174H9" class="gr"/><path d="M-7 180Q-3 175 0 180Q3 185 7 180Q3 175 0 180Q-3 185-7 180" class="bl"/>
<path d="M1 190V206H8z" class="bl"/><path d="M-1 190V206H-8z" class="gr"/>
<path d="M8 213H-2Q-8 213-8 219Q-8 225-2 225H8M8 217H-2Q-4 217-4 219Q-4 221-2 221H8" class="bl"/>
<rect x="-7" y="235" width="6" height="6" class="bl"/><rect x="2" y="235" width="6" height="6" class="bl"/><rect x="-7" y="243" width="6" height="6" class="bl"/><rect x="2" y="243" width="6" height="6" class="bl"/>
<path d="M0 254L-3 258H3zM0 272L-3 268H3zM-9 263L-5 260V266zM9 263L5 260V266zM0 256V270M-7 263H7" fill="#ddd" stroke="#ddd"/>
<path d="M3 278L0 281L3 284M-1 281Q8 281 8 287A7 7 0 1 1-7 284" class="gr"/>
<rect x="-8" y="299" width="16" height="16" class="bl"/><rect x="-8" y="305" width="9" height="10" class="gr" style="fill:#3a4350"/>
<path d="M-8 321H-1V337H-8zM-1 321L8 337H-1M-5 332H2" class="bl"/>
<path d="M-8 343H8M-5 343L5 362M5 343L-5 362" class="gr" style="stroke-width:2"/><circle cx="-4" cy="359" r="2.5" class="gr"/><circle cx="5" cy="359" r="2.5" class="gr"/>
<path d="M-8 373H6L3 371M6 373L3 375M8 366V381" class="gr"/>
<path d="M-8 390V401H8V385M2 385V390" class="gr"/>
<path d="M-8 406V421H8V406H3M-2 406V414" class="gr"/>
<path d="M-8 439H8M-3 436V442M3 436V442" class="bl"/>
<path d="M-7 468L2 455M3 454H8M-7 471V475" class="gr"/>
<path d="M-7 482Q-7 475 0 475H8M-7 484V491" class="bl"/>
<path d="M-7 514Q-6 497 0 505Q4 512 8 497M8 500V510" class="bl"/>
<path d="M-7 523L-3 519H8V533L4 537H-7zM-7 523H4V537M4 523L8 519M-3 527V537" class="bl"/>
</g>

<!-- Command line -->
<rect x="2" y="1238" width="27" height="55" fill="#2f3643"/>
<rect x="29" y="1238" width="1697" height="30" fill="#c8c8c8"/>
<rect x="29" y="1269" width="1697" height="24" fill="#fff"/>
<path d="M29 1268.5H1726" stroke="#2c3340"/>
<path d="M8 1245H25" stroke="#d0d3d8" stroke-width="4" stroke-dasharray="1.5 1.5"/>
<path d="M11 1256L19 1264M19 1256L11 1264" stroke="#d0d3d8" stroke-width="2"/>
<path d="M9 1291L17 1283Q15 1277 21 1275L19 1279L22 1281L25 1278Q25 1284 19 1285L11 1293z" fill="#d8dadc"/>
<text x="33.5" y="1262" style="font-family:'DejaVu Sans Mono','Noto Sans CJK SC',monospace;font-size:17px;fill:#222" textLength="740" lengthAdjust="spacingAndGlyphs">[全部(A)/中心(C)/动态(D)/范围(E)/上一个(P)/比例(S)/窗口(W)/对象(O)] &lt;实时&gt;: _e</text>
<rect x="34" y="1275" width="14" height="12" fill="#fff" stroke="#555"/><rect x="34" y="1275" width="14" height="3" fill="#666"/>
<path d="M36 1281L38 1283L36 1285" stroke="#333" fill="none"/>
<path d="M51 1279H58L54.5 1283z" fill="#888"/>
<text x="67" y="1287" style="font-size:17px;fill:#9a9a9a;font-style:italic">键入命令</text>

<!-- Layout tabs -->
<path d="M16 1295H62L58 1312H22zM66 1295H112L106 1312H72zM120 1295H170L164 1312H126zM178 1295H196L192 1312H174z" fill="#3a4350"/>
<text x="27" y="1308" style="font-size:12.5px;fill:#fff;font-weight:700">模型</text>
<text x="74" y="1308" style="font-size:12.5px;fill:#a3a8b0">布局1</text>
<text x="128" y="1308" style="font-size:12.5px;fill:#a3a8b0">布局2</text>
<path d="M186 1299V1308M181.5 1303.5H190.5" stroke="#bbb" stroke-width="2"/>

<!-- Status bar -->
<g transform="translate(0,1307)">
<g fill="#3a4350"><rect x="1124" y="-10" width="30" height="22"/><rect x="1157" y="-10" width="64" height="22"/><rect x="1225" y="-10" width="102" height="22"/><rect x="1329" y="-10" width="64" height="22"/><rect x="1395" y="-10" width="23" height="22"/><rect x="1422" y="-10" width="105" height="22"/><rect x="1530" y="-10" width="39" height="22"/><rect x="1571" y="-10" width="24" height="22"/><rect x="1598" y="-10" width="24" height="22"/><rect x="1625" y="-10" width="48" height="22"/><rect x="1677" y="-10" width="23" height="22"/></g>
<text x="1127" y="5" style="font-size:12.5px;fill:#d5d7da">模型</text>
<path d="M1161-6H1175M1161 0H1175M1161 5H1175M1164-9V8M1170-9V8M1173-9V8" stroke="#ccd" fill="none"/>
<path d="M1187-5H1199M1187 0H1199M1187 5H1199" stroke="#ccd" stroke-width="2.5" stroke-dasharray="2.5 2.5"/>
<use href="#ar" x="1213" y="1"/>
<rect x="1225" y="-10" width="22" height="22" fill="#5b8cc6"/><path d="M1229-8V9H1244M1229 3H1238V9" fill="none" stroke="#fff" stroke-width="1.3"/>
<circle cx="1260" cy="1" r="6" class="gr"/><path d="M1256 6L1266-5M1257 1H1265" class="gr"/><use href="#ar" x="1280" y="1"/>
<path d="M1293-8L1305 9" stroke="#a34"/><path d="M1298 9L1300-8" stroke="#4a7"/><circle cx="1299" cy="0" r="2" fill="#ddd"/><use href="#ar" x="1319" y="1"/>
<path d="M1333 8H1349M1333 8L1347-7" class="gr"/><circle cx="1341" cy="0" r="1.5" fill="#ddd"/>
<rect x="1354" y="-10" width="22" height="22" fill="#5b8cc6"/><rect x="1357" y="-8" width="4" height="4" fill="none" stroke="#fff"/><path d="M1359-4V8H1373V-6H1361" fill="none" stroke="#fff" stroke-width="1.3"/><use href="#ar" x="1385" y="1"/>
<path d="M1399-5H1414M1399 0H1409M1399 4H1414M1399 8H1407" stroke="#d8dadc" stroke-width="2"/>
<rect x="1422" y="-10" width="22" height="22" fill="#5b8cc6"/>
<path d="M1433-8L1437 0L1441 9L1433 4L1425 9z" fill="#fff"/><circle cx="1439" cy="-4" r="2.5" fill="none" stroke="#fff"/>
<path d="M1456-7L1460 1L1464 9L1456 4L1448 9z" fill="#d0d2d5"/><path d="M1463-6L1461-2" stroke="#fff" stroke-width="2"/>
<path d="M1480-7L1484 1L1488 9L1480 4L1472 9z" fill="#d0d2d5"/>
<text x="1498" y="5" style="font-size:12.5px;fill:#d0d2d5">1:1</text><use href="#ar" x="1519" y="1"/>
<path d="M1541-7L1544-6L1547-8L1549-6L1548-3L1549 0L1551 1V3L1549 4L1548 7L1549 9L1547 11L1544 9L1541 10L1539 9L1536 11L1534 9L1535 7L1534 4L1532 3V1L1534 0L1535-3L1534-6L1536-8L1539-6z" fill="#d0d2d5" transform="translate(0,-1)"/><circle cx="1541" cy="1" r="2.5" fill="#3a4350"/><use href="#ar" x="1562" y="1"/>
<path d="M1583-7V10M1575 1H1591" stroke="#e8e8e8" stroke-width="2"/>
<rect x="1602" y="-8" width="7" height="7" class="gr"/><circle cx="1615" cy="-3" r="3.5" class="gr"/><path d="M1605 9L1608 2L1612 9z" class="gr"/>
<path d="M1627-8L1641 1" stroke="#7dbbe8" stroke-width="2"/><rect x="1627" y="-3" width="12" height="10" fill="#f0b13a"/><path d="M1630 4L1635 9L1643 0" stroke="#4caf73" stroke-width="3" fill="none"/>
<rect x="1650" y="-8" width="15" height="15" fill="#8f9296"/><path d="M1651 0L1656-5L1661 4L1665-2" stroke="#ddd" fill="none"/><path d="M1657 9L1662-1L1667 9z" fill="#f0a878"/>
<rect x="1681" y="-7" width="16" height="15" class="gr"/><path d="M1684 5L1688 1M1690-1L1694-5M1692-5H1694V-3M1684 3V5H1686" stroke="#ddd" fill="none"/>
<path d="M1704-6H1720M1704 1H1720M1704 8H1720" stroke="#d8dadc" stroke-width="2"/>
</g>

<!-- blue window border -->
<rect x="0" y="0" width="1731" height="2" fill="#0f7fb5"/>
<rect x="0" y="0" width="2" height="1327" fill="#0f7fb5"/>
<rect x="1729" y="0" width="2" height="1327" fill="#0f7fb5"/>
<rect x="0" y="1325" width="1731" height="2" fill="#0f7fb5"/>
</svg>
</body></html>
